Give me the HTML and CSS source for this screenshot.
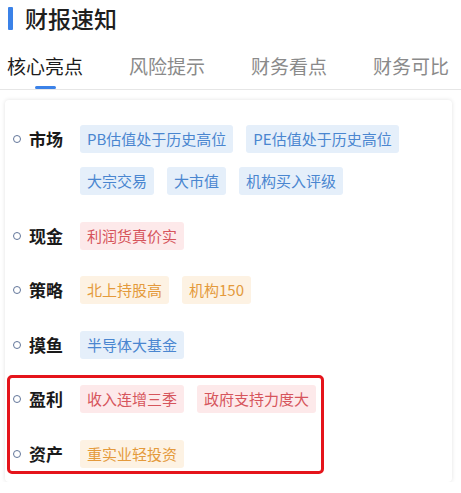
FILE: index.html
```html
<!DOCTYPE html>
<html lang="zh-CN">
<head>
<meta charset="utf-8">
<title>财报速知</title>
<link rel="stylesheet" href="styles.css">
</head>
<body>
<header class="head">
  <span class="head-bar"></span>
  <h1 class="head-title">财报速知</h1>
</header>
<nav class="tabs">
  <div class="tab active"><span class="tab-text">核心亮点</span><span class="tab-line"></span></div>
  <div class="tab"><span class="tab-text">风险提示</span></div>
  <div class="tab"><span class="tab-text">财务看点</span></div>
  <div class="tab"><span class="tab-text">财务可比</span></div>
</nav>
<section class="card">
  <div class="row">
    <span class="dot"></span><span class="label">市场</span>
    <div class="tags">
      <span class="tag blue">PB估值处于历史高位</span>
      <span class="tag blue">PE估值处于历史高位</span>
      <span class="tag blue">大宗交易</span>
      <span class="tag blue">大市值</span>
      <span class="tag blue">机构买入评级</span>
    </div>
  </div>
  <div class="row">
    <span class="dot"></span><span class="label">现金</span>
    <div class="tags"><span class="tag red">利润货真价实</span></div>
  </div>
  <div class="row">
    <span class="dot"></span><span class="label">策略</span>
    <div class="tags"><span class="tag orange">北上持股高</span><span class="tag orange">机构150</span></div>
  </div>
  <div class="row">
    <span class="dot"></span><span class="label">摸鱼</span>
    <div class="tags"><span class="tag blue">半导体大基金</span></div>
  </div>
  <div class="marked">
    <div class="row">
      <span class="dot"></span><span class="label">盈利</span>
      <div class="tags"><span class="tag red">收入连增三季</span><span class="tag red">政府支持力度大</span></div>
    </div>
    <div class="row">
      <span class="dot"></span><span class="label">资产</span>
      <div class="tags"><span class="tag orange">重实业轻投资</span></div>
    </div>
  </div>
</section>
</body>
</html>
```
FILE: styles.css
```css
* { box-sizing: border-box; }
body {
  margin: 0;
  background: #fff;
  font-family: "Noto Sans CJK SC", "Noto Sans", sans-serif;
  color: #1c1c1c;
  width: 461px;
}
.head {
  display: flex;
  align-items: center;
  padding: 2px 0 0 8px;
  height: 34px;
}
.head-bar {
  width: 5px;
  height: 23px;
  background: #3b82e8;
  border-radius: 1px;
}
.head-title {
  margin: 0 0 0 12px;
  font-size: 23px;
  font-weight: 500;
  line-height: 32px;
  color: #1e1e1e;
}
.tabs {
  display: flex;
  gap: 46px;
  margin-top: 18px;
  padding-left: 7px;
  height: 38px;
  border-bottom: 1px solid #e6e6e6;
  overflow: hidden;
}
.tab {
  display: flex;
  flex-direction: column;
  align-items: center;
  flex: none;
  height: 37px;
}
.tab-text {
  font-size: 19px;
  line-height: 28px;
  color: #8a8a8a;
  white-space: nowrap;
}
.tab.active .tab-text { color: #1c1c1c; }
.tab-line {
  margin-top: auto;
  width: 21px;
  height: 3px;
  border-radius: 2px;
  background: #3b82e8;
}
.card {
  margin: 10px 9px 0 5px;
  padding: 25px 10px 14px 8px;
  background: #fff;
  border-radius: 4px;
  box-shadow: 0 0 4px rgba(0, 0, 0, 0.12);
}
.row {
  display: flex;
  align-items: flex-start;
  margin-bottom: 26.5px;
}
.row:last-child { margin-bottom: 0; }
.dot {
  flex: none;
  width: 8px;
  height: 8px;
  margin-top: 10px;
  border: 1px solid #62769a;
  border-radius: 50%;
}
.label {
  flex: none;
  margin-left: 8px;
  width: 51px;
  font-size: 17px;
  font-weight: 700;
  line-height: 28px;
  color: #1a1a1a;
}
.tags {
  display: flex;
  flex-wrap: wrap;
  gap: 14px 13px;
}
.tag {
  height: 28px;
  line-height: 28px;
  padding: 0 7px;
  font-size: 15px;
  border-radius: 3px;
  white-space: nowrap;
}
.blue { background: #e5effa; color: #4a86d0; }
.red { background: #fde9ea; color: #d6555c; }
.orange { background: #fdf2e3; color: #e49a3c; }
.marked { position: relative; }
.marked::after {
  content: "";
  position: absolute;
  left: -6px;
  top: -10px;
  width: 311px;
  bottom: -6px;
  border: 3px solid #e5141b;
  border-radius: 5px;
  pointer-events: none;
}
```
